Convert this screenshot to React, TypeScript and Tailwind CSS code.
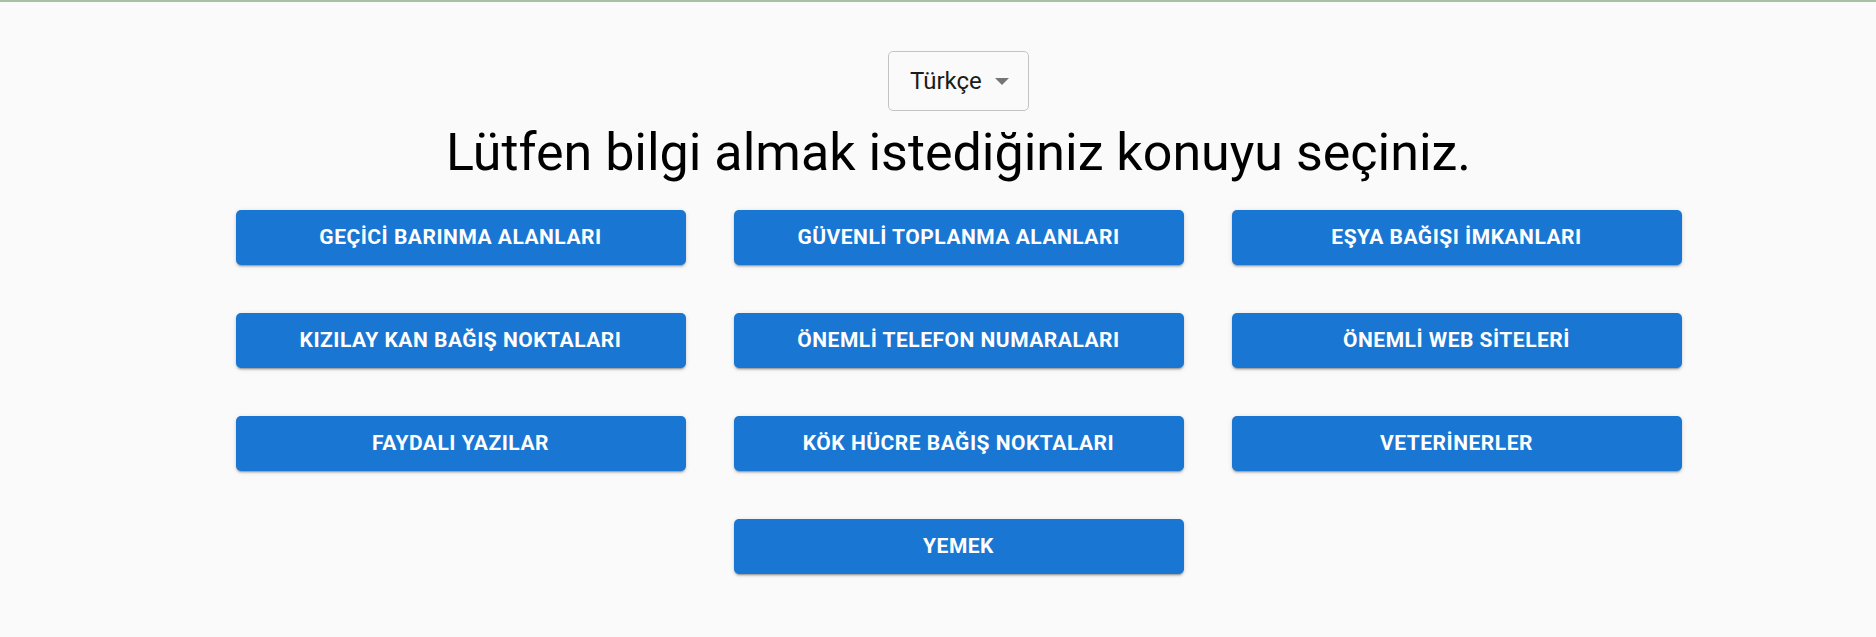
import React from "react";

const items: { label: string; extra?: string }[] = [
  { label: "GEÇİCİ BARINMA ALANLARI" },
  { label: "GÜVENLİ TOPLANMA ALANLARI" },
  { label: "EŞYA BAĞIŞI İMKANLARI" },
  { label: "KIZILAY KAN BAĞIŞ NOKTALARI" },
  { label: "ÖNEMLİ TELEFON NUMARALARI" },
  { label: "ÖNEMLİ WEB SİTELERİ" },
  { label: "FAYDALI YAZILAR" },
  { label: "KÖK HÜCRE BAĞIŞ NOKTALARI" },
  { label: "VETERİNERLER" },
  { label: "YEMEK", extra: "col-start-2" },
];

export default function App() {
  return (
    <div className="min-h-screen bg-[#fafafa] font-['Roboto',sans-serif]">
      <div className="h-[2px] bg-[#a5c2a1]" />
      <div className="flex flex-col items-center pl-[41px] pt-[49px]">
        <div className="flex h-[60px] w-[141px] items-center justify-between rounded-[5px] border border-[#c4c4c4] bg-[#fafafa] pl-[21px] pr-[19px]">
          <span className="text-[24px] leading-none text-[#1b1b1b]">Türkçe</span>
          <svg width="14" height="7" viewBox="0 0 14 7" className="mt-[1px] shrink-0">
            <path d="M0 0 L14 0 L7 7 Z" fill="#757575" />
          </svg>
        </div>
        <h1 className="mt-[12px] text-[52px] font-normal leading-[60px] text-black">
          Lütfen bilgi almak istediğiniz konuyu seçiniz.
        </h1>
        <div className="mt-[27px] grid grid-cols-[repeat(3,450px)] gap-x-[48px] gap-y-[48px]">
          {items.map((it) => (
            <button
              key={it.label}
              className={`flex h-[55px] items-center justify-center rounded-[5px] bg-[#1976d2] text-[21px] font-bold tracking-[0.5px] text-white shadow-[0_3px_1px_-2px_rgba(0,0,0,0.2),0_2px_2px_0_rgba(0,0,0,0.14),0_1px_5px_0_rgba(0,0,0,0.12)] ${it.extra ?? ""}`}
            >
              {it.label}
            </button>
          ))}
        </div>
      </div>
    </div>
  );
}
